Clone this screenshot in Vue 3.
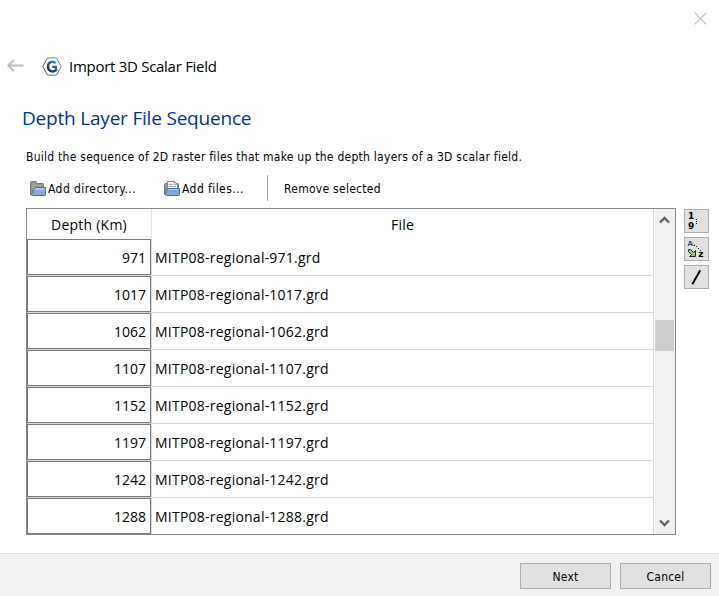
<script setup>
const rows = [971, 1017, 1062, 1107, 1152, 1197, 1242, 1288].map((depth) => ({
  depth,
  file: `MITP08-regional-${depth}.grd`,
}))
</script>

<template>
  <div class="wizard">
    <header class="titlebar">
      <svg class="close" width="13" height="13" viewBox="0 0 13 13"><path d="M.7.7l11.6 11.6M12.3.7L.7 12.3" /></svg>
    </header>
    <div class="nav">
      <svg class="back" width="17" height="13" viewBox="0 0 17 13"><path d="M16.5 6.5H1.5M6.8 1L1.3 6.5 6.8 12" /></svg>
      <svg class="logo" width="20" height="19" viewBox="0 0 20 19">
        <defs>
          <linearGradient id="hex" x1="0" y1="1" x2="1" y2="0">
            <stop offset="0" stop-color="#4f5866" /><stop offset=".5" stop-color="#536f91" /><stop offset="1" stop-color="#48a4e6" />
          </linearGradient>
          <linearGradient id="gee" x1="0" y1="1" x2="1" y2="0">
            <stop offset="0" stop-color="#142860" /><stop offset=".55" stop-color="#234b8d" /><stop offset="1" stop-color="#3b9cdf" />
          </linearGradient>
        </defs>
        <path d="M5.6.9h8.8l4.9 8.6-4.9 8.6H5.6L.7 9.5z" fill="#fff" stroke="url(#hex)" stroke-width="1" />
        <path d="M13.8 6.3C11.4 3.6 6 4.5 6 9.5s5.2 6.2 8 3.6V9.8h-3.6" fill="none" stroke="url(#gee)" stroke-width="2.3" />
      </svg>
      <span class="nav-title">Import 3D Scalar Field</span>
    </div>
    <h1>Depth Layer File Sequence</h1>
    <p class="intro">Build the sequence of 2D raster files that make up the depth layers of a 3D scalar field.</p>

    <div class="toolbar">
      <button class="tool directory">
        <svg width="16" height="16" viewBox="0 0 16 16">
          <path d="M.5 13.5v-12q0-1 1-1h4q1 0 1 1v1h6q1 0 1 1v10z" fill="#969696" stroke="#747474" />
          <path d="M2 4.5h10M2 6.5h10" stroke="#aaa" />
          <path d="M5.3 6.5h10.2v7q0 1-1 1H2.3q-1 0-.8-1l1.5-2V9.5z" fill="#82a8d8" stroke="#4870a8" />
          <path d="M5.5 7.5h9M4.5 8.5h10" stroke="#a9c5e8" />
        </svg>
        <span>Add directory...</span>
      </button>
      <button class="tool files">
        <svg width="16" height="16" viewBox="0 0 16 16">
          <path d="M.5 13.5v-10q0-1 1-1h12q1 0 1 1v10z" fill="#969696" stroke="#747474" />
          <path d="M3.5.5h7l3 3v6h-10z" fill="#f8f8f8" stroke="#858585" />
          <path d="M10.5.5v3h3M5 3.5h4M5 5.5h7" fill="none" stroke="#aaa" />
          <path d="M3.3 7.5h12.2v6q0 1-1 1H2.3q-1 0-.8-1l1-3z" fill="#82a8d8" stroke="#4870a8" />
          <path d="M4 8.5h11" stroke="#a9c5e8" />
        </svg>
        <span>Add files...</span>
      </button>
      <i class="divider"></i>
      <button class="tool remove"><span>Remove selected</span></button>
    </div>

    <main class="content">
      <div class="table">
        <div class="grid">
          <div class="head"><div class="depth-head"><span>Depth (Km)</span></div><div class="file-head"><span>File</span></div></div>
          <div v-for="row in rows" :key="row.depth" class="row">
            <div class="depth"><span>{{ row.depth }}</span></div>
            <div class="file"><span>{{ row.file }}</span></div>
          </div>
        </div>
        <div class="scrollbar">
          <svg width="11" height="8" viewBox="0 0 11 8"><path d="M1 6.5L5.5 2 10 6.5" /></svg>
          <i class="thumb"></i>
          <svg class="down" width="11" height="8" viewBox="0 0 11 8"><path d="M1 1.5L5.5 6 10 1.5" /></svg>
        </div>
      </div>
      <div class="side">
        <button>
          <svg width="23" height="22" viewBox="0 0 23 22">
            <text x="3" y="9.2" font-size="9">1</text>
            <text x="3" y="19" font-size="9">9</text>
            <path d="M11 9h1v1h-1zm0 2h1v1h-1zm0 2h1v1h-1z" fill="#222" />
          </svg>
        </button>
        <button>
          <svg width="23" height="22" viewBox="0 0 23 22">
            <text x="2.6" y="8" font-size="7" class="blue">A</text>
            <path d="M9 7h1v1H9zM11 8h1v1h-1zM13 10h1v1h-1zM15 12h1v1h-1z" fill="#222" />
            <path d="M3.5 11.5h2l3.2 3 1.8-2v6h-6l2-1.8-3-3z" fill="#9bc884" stroke="#18351a" stroke-width="1" />
            <text x="13.3" y="18.8" font-size="9">z</text>
          </svg>
        </button>
        <button><svg width="23" height="22" viewBox="0 0 23 22"><path d="M7.3 18.3L15.3 4.2" stroke="#000" stroke-width="2" /></svg></button>
      </div>
    </main>
    <footer>
      <button>Next</button>
      <button>Cancel</button>
    </footer>
  </div>
</template>

<style>
body { margin: 0; background: #fff; }
</style>

<style scoped>
* { box-sizing: border-box; }
.wizard { width: 719px; height: 596px; display: flex; flex-direction: column; overflow: hidden; background: #fff; color: #000; font: 12px "DejaVu Sans Condensed", "DejaVu Sans", sans-serif; font-stretch: condensed; }
svg { display: block; flex: none; }
button { margin: 0; padding: 0; border: 0; background: none; font: inherit; color: inherit; }
span, h1, p { white-space: nowrap; }
.titlebar { height: 52px; flex: none; display: flex; justify-content: flex-end; padding: 12px 12px 0 0; }
.close path { stroke: #bababa; stroke-width: 1.1; }
.nav { height: 28px; flex: none; display: flex; align-items: center; padding-left: 7px; }
.back { margin-bottom: 2px; }
.back path { fill: none; stroke: #bcbcbc; stroke-width: 1.8; }
.logo { margin-left: 18px; }
.nav-title { margin-left: 7px; font: 15px/28px "Open Sans", sans-serif; letter-spacing: -.28px; }
h1 { height: 34px; flex: none; margin: 21px 0 0 22px; font: 400 19px/34px "Open Sans", sans-serif; color: #003399; letter-spacing: -.2px; }
.intro { height: 20px; flex: none; margin: 12px 0 0 26px; line-height: 20px; letter-spacing: .26px; }
.toolbar { height: 26px; flex: none; display: flex; align-items: center; margin: 8px 0 0 30px; }
.tool { height: 24px; display: flex; align-items: center; letter-spacing: .43px; }
.tool span { padding-top: 2px; }
.tool svg { margin: 1px 2px 0 0; }
.directory { width: 134px; }
.files { width: 103px; }
.remove { letter-spacing: .27px; }
.divider { width: 1px; height: 26px; background: #a0a0a0; margin-right: 16px; }
.content { height: 327px; flex: none; display: flex; margin: 7px 0 0 26px; align-items: flex-start; }
.table { width: 650px; height: 327px; display: flex; border: 1px solid #828790; overflow: hidden; }
.grid { width: 627px; border-right: 1px solid #d8d8d8; font: 14px "Open Sans", sans-serif; letter-spacing: .23px; }
.head { height: 30px; display: flex; line-height: 32px; text-align: center; }
.depth-head { width: 125px; border-right: 1px solid #e5e5e5; }
.file-head { flex: 1; }
.row { height: 37px; display: flex; border-bottom: 1px solid #d8d8d8; line-height: 37px; }
.row:last-child { border-bottom: 0; height: 36px; }
.depth { width: 124px; height: 36px; border: 1px solid #7a7a7a; text-align: right; padding-right: 4px; line-height: 36px; letter-spacing: 0; }
.file { flex: 1; border-left: 1px solid #d8d8d8; padding-left: 3px; }
.scrollbar { width: 20px; margin-left: 1px; background: #f0f0f0; display: flex; flex-direction: column; align-items: center; padding: 7px 1px 0 0; }
.scrollbar path { fill: none; stroke: #606060; stroke-width: 2.3; }
.thumb { width: 19px; height: 31px; margin-top: 96px; align-self: flex-start; background: #cdcdcd; }
.scrollbar .down { margin-top: 168px; }
.side { margin: 1px 0 0 8px; display: grid; gap: 4px; }
.side button { width: 25px; height: 24px; border: 1px solid #adadad; background: #e1e1e1; }
.side text { font-family: "DejaVu Sans", sans-serif; font-weight: 700; font-stretch: normal; fill: #000; }
.side .blue { fill: #31506f; }
footer { flex: 1; margin-top: 18px; border-top: 1px solid #dfdfdf; background: #f0f0f0; display: flex; justify-content: flex-end; gap: 9px; padding: 9px 8px 0 0; }
footer button { width: 91px; height: 26px; padding-top: 2px; border: 1px solid #adadad; background: #e1e1e1; letter-spacing: .2px; }
</style>
